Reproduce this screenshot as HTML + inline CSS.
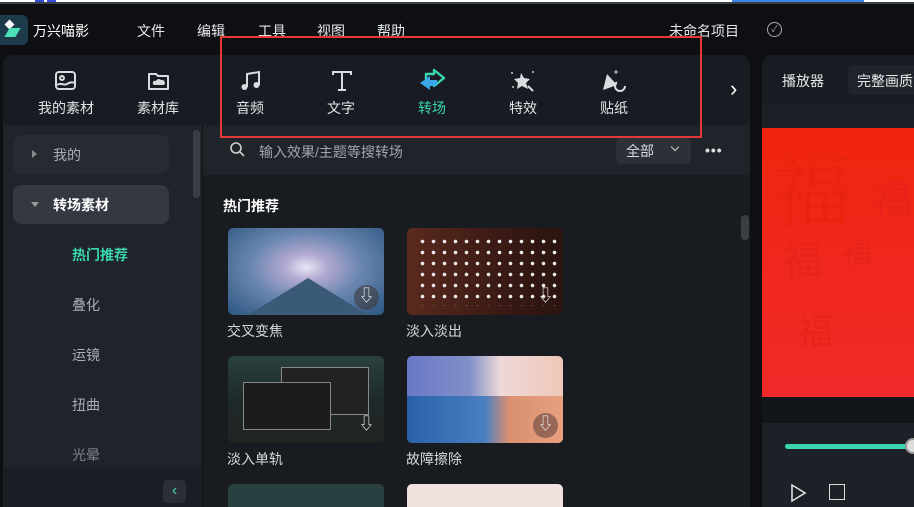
<!DOCTYPE html>
<html style="width:914px;height:507px;overflow:hidden"><head><meta charset="utf-8">
<style>
*{margin:0;padding:0;box-sizing:border-box}
body{width:914px;height:507px;overflow:hidden;background:#0d0f12;font-family:"Liberation Sans","Noto Sans CJK SC",sans-serif;color:#e6e8eb;position:relative}
.a{position:absolute}
.t{font-size:14px;white-space:nowrap}
.tb{color:#dfe2e6;font-size:14px}
.ic{stroke:#d8dbe0;fill:none;stroke-width:2}
.card{position:absolute;width:156px;height:87px;border-radius:5px;overflow:hidden}
.dl{position:absolute;right:5px;bottom:5px;width:25px;height:25px;border-radius:50%;background:rgba(60,60,60,.6)}
.dl:after{content:"⇩";position:absolute;left:0;top:1px;width:25px;text-align:center;color:#eee;font-size:16px;line-height:22px}
.lbl{position:absolute;font-size:14px;color:#d5d8dc}
.sub{position:absolute;left:72px;font-size:14px;color:#a9aeb4}
</style></head><body>
<div class="a" style="left:0;top:0;width:914px;height:2px;background:#fff"></div>
<div class="a" style="left:35px;top:0;width:9px;height:2px;background:#3b4ce0"></div>
<div class="a" style="left:47px;top:0;width:9px;height:2px;background:#3b4ce0"></div>
<div class="a" style="left:732px;top:0;width:132px;height:2px;background:#3a86e8"></div>
<div class="a" style="left:0;top:2px;width:914px;height:2px;background:#3a3f45"></div>

<div class="a" style="left:0;top:15px;width:28px;height:30px;background:#1c3a4a;border-radius:0 6px 6px 0"></div>
<div class="a" style="left:6px;top:21px;width:7px;height:7px;background:#fff;transform:rotate(45deg)"></div>
<div class="a" style="left:7px;top:28px;width:11px;height:9px;background:#4be0b8;transform:skewX(-30deg)"></div>
<div class="a t" style="left:33px;top:21px;color:#fff">万兴喵影</div>
<div class="a t" style="left:137px;top:21px">文件</div>
<div class="a t" style="left:197px;top:21px">编辑</div>
<div class="a t" style="left:258px;top:21px">工具</div>
<div class="a t" style="left:317px;top:21px">视图</div>
<div class="a t" style="left:377px;top:21px">帮助</div>
<div class="a t" style="left:669px;top:21px">未命名项目</div>
<div class="a" style="left:767px;top:22px;width:15px;height:15px;border:1.5px solid #aaa;border-radius:50%;font-size:9px;color:#aaa;text-align:center;line-height:12px">✓</div>

<div class="a" style="left:3px;top:55px;width:747px;height:70px;background:#181c22;border-radius:10px 10px 0 0"></div>
<svg class="a" style="left:55px;top:69px" width="24" height="24" viewBox="0 0 24 24"><rect x="1" y="3" width="19" height="17" rx="3" class="ic"/><circle cx="7" cy="9" r="2" class="ic"/><path d="M2 16c4-3 7 1 10-1s5-2 8-1" class="ic"/></svg>
<div class="a tb" style="left:38px;top:98px">我的素材</div>
<svg class="a" style="left:147px;top:69px" width="24" height="24" viewBox="0 0 24 24"><path d="M2 5h7l2 2h10v13H2z" class="ic" stroke-linejoin="round"/><path d="M7 16h10a3 3 0 0 0-3-5 3 3 0 0 0-5 1 2 2 0 0 0-2 4z" fill="#d8dbe0"/></svg>
<div class="a tb" style="left:137px;top:98px">素材库</div>
<svg class="a" style="left:239px;top:69px" width="24" height="24" viewBox="0 0 24 24"><path d="M8 18V5l12-2v13" class="ic"/><circle cx="5.5" cy="18" r="3" fill="#d8dbe0"/><circle cx="17.5" cy="16" r="3" fill="#d8dbe0"/></svg>
<div class="a tb" style="left:236px;top:98px">音频</div>
<svg class="a" style="left:330px;top:69px" width="24" height="24" viewBox="0 0 24 24"><path d="M3 6V3h18v3M12 3v18M8 21h8" class="ic" stroke-width="2.4"/></svg>
<div class="a tb" style="left:327px;top:98px">文字</div>
<svg class="a" style="left:418px;top:68px" width="30" height="24" viewBox="0 0 30 24"><path d="M16 2l10 8-10 8v-4H8V6h8z" fill="none" stroke="#3ad6b0" stroke-width="2.4" stroke-linejoin="round"/><path d="M12 8L2 15l10 7v-4h7v-6h-7z" fill="#3aa8e8"/></svg>
<div class="a tb" style="left:418px;top:98px;color:#3ad6b0">转场</div>
<svg class="a" style="left:509px;top:69px" width="28" height="26" viewBox="0 0 28 26"><path d="M12 4l3 5 6 1-4 4 2 6-6-3-5 3 1-6-4-4 6-1z" fill="#d8dbe0"/><path d="M19 17l5 5" class="ic"/><circle cx="3" cy="4" r="1" fill="#ccc"/><circle cx="24" cy="3" r="1" fill="#ccc"/><circle cx="4" cy="18" r="1" fill="#ccc"/></svg>
<div class="a tb" style="left:509px;top:98px">特效</div>
<svg class="a" style="left:600px;top:68px" width="28" height="28" viewBox="0 0 28 28"><path d="M3 22l4-16 10 11z" fill="#d8dbe0"/><circle cx="20" cy="18" r="5" class="ic" stroke-dasharray="20 12"/><path d="M16 2v4M14 4h4" stroke="#ccc" stroke-width="1"/></svg>
<div class="a tb" style="left:600px;top:98px">贴纸</div>
<div class="a" style="left:730px;top:76px;font-size:22px;color:#fff">›</div>

<div class="a" style="left:762px;top:55px;width:152px;height:452px;background:#181c22;border-radius:10px 0 0 0"></div>
<div class="a t" style="left:782px;top:71px">播放器</div>
<div class="a" style="left:848px;top:65px;width:70px;height:30px;background:#1f242b;border-radius:6px"></div>
<div class="a t" style="left:857px;top:71px">完整画质</div>
<div class="a" style="left:762px;top:104px;width:152px;height:25px;background:#1c2026"></div>
<div class="a" style="left:762px;top:128px;width:152px;height:269px;background:linear-gradient(180deg,#f0240e,#f02a2a);overflow:hidden">
<div class="a" style="left:10px;top:0;font-size:80px;color:#e8240f;font-family:'Noto Serif CJK SC',serif">福</div>
<div class="a" style="left:20px;top:100px;font-size:40px;color:#e8241a">福</div>
<div class="a" style="left:80px;top:100px;font-size:30px;color:#e8241a">福</div>
<div class="a" style="left:35px;top:175px;font-size:36px;color:#e8241a">福</div>
<div class="a" style="left:110px;top:40px;font-size:40px;color:#e8241a">福</div>
</div>
<div class="a" style="left:762px;top:397px;width:152px;height:26px;background:#131619"></div>
<div class="a" style="left:762px;top:423px;width:152px;height:84px;background:#1c2027"></div>
<div class="a" style="left:785px;top:444px;width:125px;height:5px;background:#3ad6b0;border-radius:3px"></div>
<div class="a" style="left:905px;top:438px;width:16px;height:16px;background:#ddd;border-radius:50%;border:2px solid #999"></div>
<svg class="a" style="left:789px;top:483px" width="20" height="20"><path d="M3 2l13 8-13 8z" fill="none" stroke="#ddd" stroke-width="1.6"/></svg>
<div class="a" style="left:829px;top:484px;width:16px;height:16px;border:1.6px solid #ddd"></div>

<div class="a" style="left:3px;top:125px;width:199px;height:382px;background:#1f242b"></div>
<div class="a" style="left:193px;top:130px;width:7px;height:68px;background:#3a3f46;border-radius:4px"></div>
<div class="a" style="left:13px;top:135px;width:156px;height:39px;background:#262b32;border-radius:8px"></div>
<div class="a" style="left:32px;top:150px;width:0;height:0;border-left:5px solid #888;border-top:4px solid transparent;border-bottom:4px solid transparent"></div>
<div class="a t" style="left:53px;top:145px;color:#a9aeb4">我的</div>
<div class="a" style="left:13px;top:185px;width:156px;height:39px;background:#343941;border-radius:8px"></div>
<div class="a" style="left:31px;top:202px;width:0;height:0;border-top:5px solid #999;border-left:4px solid transparent;border-right:4px solid transparent"></div>
<div class="a t" style="left:53px;top:195px;color:#fff;font-weight:bold">转场素材</div>
<div class="sub" style="top:245px;color:#3ad6b0;font-weight:bold">热门推荐</div>
<div class="sub" style="top:295px">叠化</div>
<div class="sub" style="top:345px">运镜</div>
<div class="sub" style="top:395px">扭曲</div>
<div class="sub" style="top:445px;color:#7e838a">光晕</div>
<div class="a" style="left:3px;top:467px;width:199px;height:40px;background:#1a1e24"></div>
<div class="a" style="left:163px;top:480px;width:23px;height:23px;background:#2a2f36;border-radius:4px;color:#3ad6b0;text-align:center;font-size:16px;line-height:21px">‹</div>
<div class="a" style="left:202px;top:125px;width:1px;height:382px;background:#111"></div>

<div class="a" style="left:203px;top:125px;width:547px;height:50px;background:#1f242b"></div>
<svg class="a" style="left:229px;top:141px" width="16" height="16"><circle cx="7" cy="7" r="5" fill="none" stroke="#ccc" stroke-width="1.6"/><path d="M11 11l4 4" stroke="#ccc" stroke-width="1.6"/></svg>
<div class="a t" style="left:259px;top:142px;color:#a0a5ab">输入效果/主题等搜转场</div>
<div class="a" style="left:616px;top:137px;width:75px;height:27px;background:#2c3138;border-radius:6px"></div>
<div class="a t" style="left:626px;top:141px;color:#d8dbe0">全部</div>
<div class="a" style="left:672px;top:144px;width:6px;height:6px;border-right:1.5px solid #ccc;border-bottom:1.5px solid #ccc;transform:rotate(45deg)"></div>
<div class="a" style="left:705px;top:142px;font-size:14px;color:#ddd;letter-spacing:1px;font-weight:bold">•••</div>
<div class="a" style="left:203px;top:175px;width:547px;height:332px;background:#181b20"></div>
<div class="a" style="left:741px;top:215px;width:8px;height:25px;background:#3a3f46;border-radius:4px"></div>
<div class="a t" style="left:223px;top:196px;color:#fff;font-weight:bold">热门推荐</div>

<div class="card" style="left:228px;top:228px;background:radial-gradient(ellipse at 50% 45%,#e8e4f4 0%,#b0a8d0 20%,#6a86b0 50%,#2a5580 100%)"><div class="a" style="left:20px;top:50px;width:0;height:0;border-left:60px solid transparent;border-right:60px solid transparent;border-bottom:37px solid #3a5a78"></div><div class="dl"></div></div>
<div class="lbl" style="left:227px;top:321px">交叉变焦</div>
<div class="card" style="left:407px;top:228px;background:linear-gradient(90deg,#5a2a1e,#3a1a14 60%,#2a1410);">
<div class="a" style="left:10px;top:8px;width:140px;height:70px;background-image:radial-gradient(circle,#eee 1.6px,transparent 2px);background-size:11px 11px"></div><div class="dl" style="background:none"></div></div>
<div class="lbl" style="left:406px;top:321px">淡入淡出</div>

<div class="card" style="left:228px;top:356px;background:linear-gradient(180deg,#2a4040,#1e2a2a 50%,#222 100%)"><div class="a" style="left:53px;top:11px;width:88px;height:48px;border:1.5px solid #888;background:#222"></div><div class="a" style="left:15px;top:26px;width:88px;height:48px;border:1.5px solid #888;background:#1c1c1c"></div><div class="dl" style="background:none"></div></div>
<div class="lbl" style="left:227px;top:449px">淡入单轨</div>
<div class="card" style="left:407px;top:356px;background:linear-gradient(90deg,#6a78c8,#8090c8 40%,#efd8d8 60%,#eec8b8)"><div class="a" style="left:0;top:40px;width:156px;height:47px;background:linear-gradient(90deg,#2a60a8,#4a80c0 50%,#d89070 65%,#e8a080)"></div><div class="dl" style="background:rgba(120,80,70,.7)"></div></div>
<div class="lbl" style="left:406px;top:449px">故障擦除</div>

<div class="card" style="left:228px;top:484px;height:23px;border-radius:5px 5px 0 0;background:#2a4040"></div>
<div class="card" style="left:407px;top:484px;height:23px;border-radius:5px 5px 0 0;background:#f0e2de"></div>

<div class="a" style="left:220px;top:36px;width:482px;height:102px;border:2px solid #e53935"></div>
</body></html>
